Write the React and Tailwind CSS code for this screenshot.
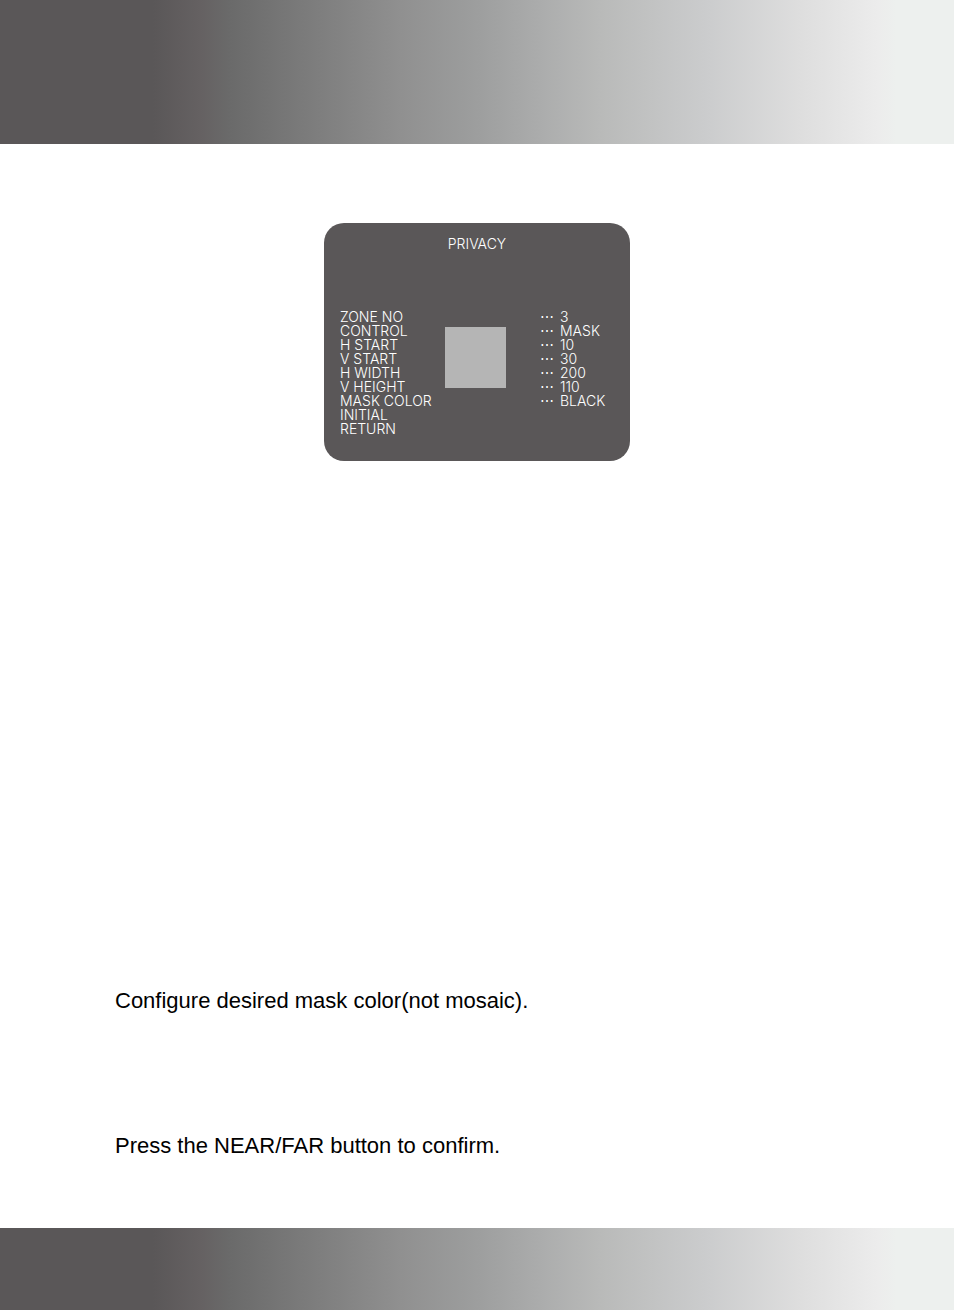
import React from 'react';

const settings = [
  { label: 'ZONE NO', value: '3' },
  { label: 'CONTROL', value: 'MASK' },
  { label: 'H START', value: '10' },
  { label: 'V START', value: '30' },
  { label: 'H WIDTH', value: '200' },
  { label: 'V HEIGHT', value: '110' },
  { label: 'MASK COLOR', value: 'BLACK' },
  { label: 'INITIAL' },
  { label: 'RETURN' },
];

const band =
  'bg-[linear-gradient(to_right,#5a5758_0%,#5a5758_16%,#656162_21%,#6a6a6a_24%,#7b7b7b_32%,#909090_42%,#9d9e9e_50%,#acadad_57%,#b9bab9_63%,#cbcccd_74%,#dedede_84%,#ececec_92%,#edf0ee_94%,#edf0ee_100%)]';

const OsdScreen = () => (
  <section className="relative mx-auto w-full max-w-[306px] rounded-[20px] bg-[#5a5758] px-4 pt-3 pb-[25px] font-['Inter',sans-serif] text-[14px] leading-[14px] font-light text-white">
    <h1 className="pt-0.5 text-center">PRIVACY</h1>
    <table className="mt-[59px] w-full border-collapse text-left">
      <tbody>
        {settings.map(({ label, value }) => (
          <tr key={label}>
            <th scope="row" className="p-0 font-light">{label}</th>
            <td className="w-5 p-0">{value && '⋯'}</td>
            <td className="w-[54px] p-0">{value}</td>
          </tr>
        ))}
      </tbody>
    </table>
    {/* masked zone */}
    <div className="absolute top-[104px] left-[121px] size-[61px] bg-[#b5b5b5]" />
  </section>
);

const App = () => (
  <div className="flex min-h-screen flex-col bg-white">
    <header className={`h-36 ${band}`} />
    <main className="flex-1 pt-[79px] pb-16">
      <OsdScreen />
      <div className="mt-[524px] flex flex-col gap-[113px] px-[115px] font-['Liberation_Sans',Arial,sans-serif] text-[22px] leading-8 text-black">
        <p>Configure desired mask color(not mosaic).</p>
        <p>Press the NEAR/FAR button to confirm.</p>
      </div>
    </main>
    <footer className={`h-[82px] ${band}`} />
  </div>
);

export default App;
